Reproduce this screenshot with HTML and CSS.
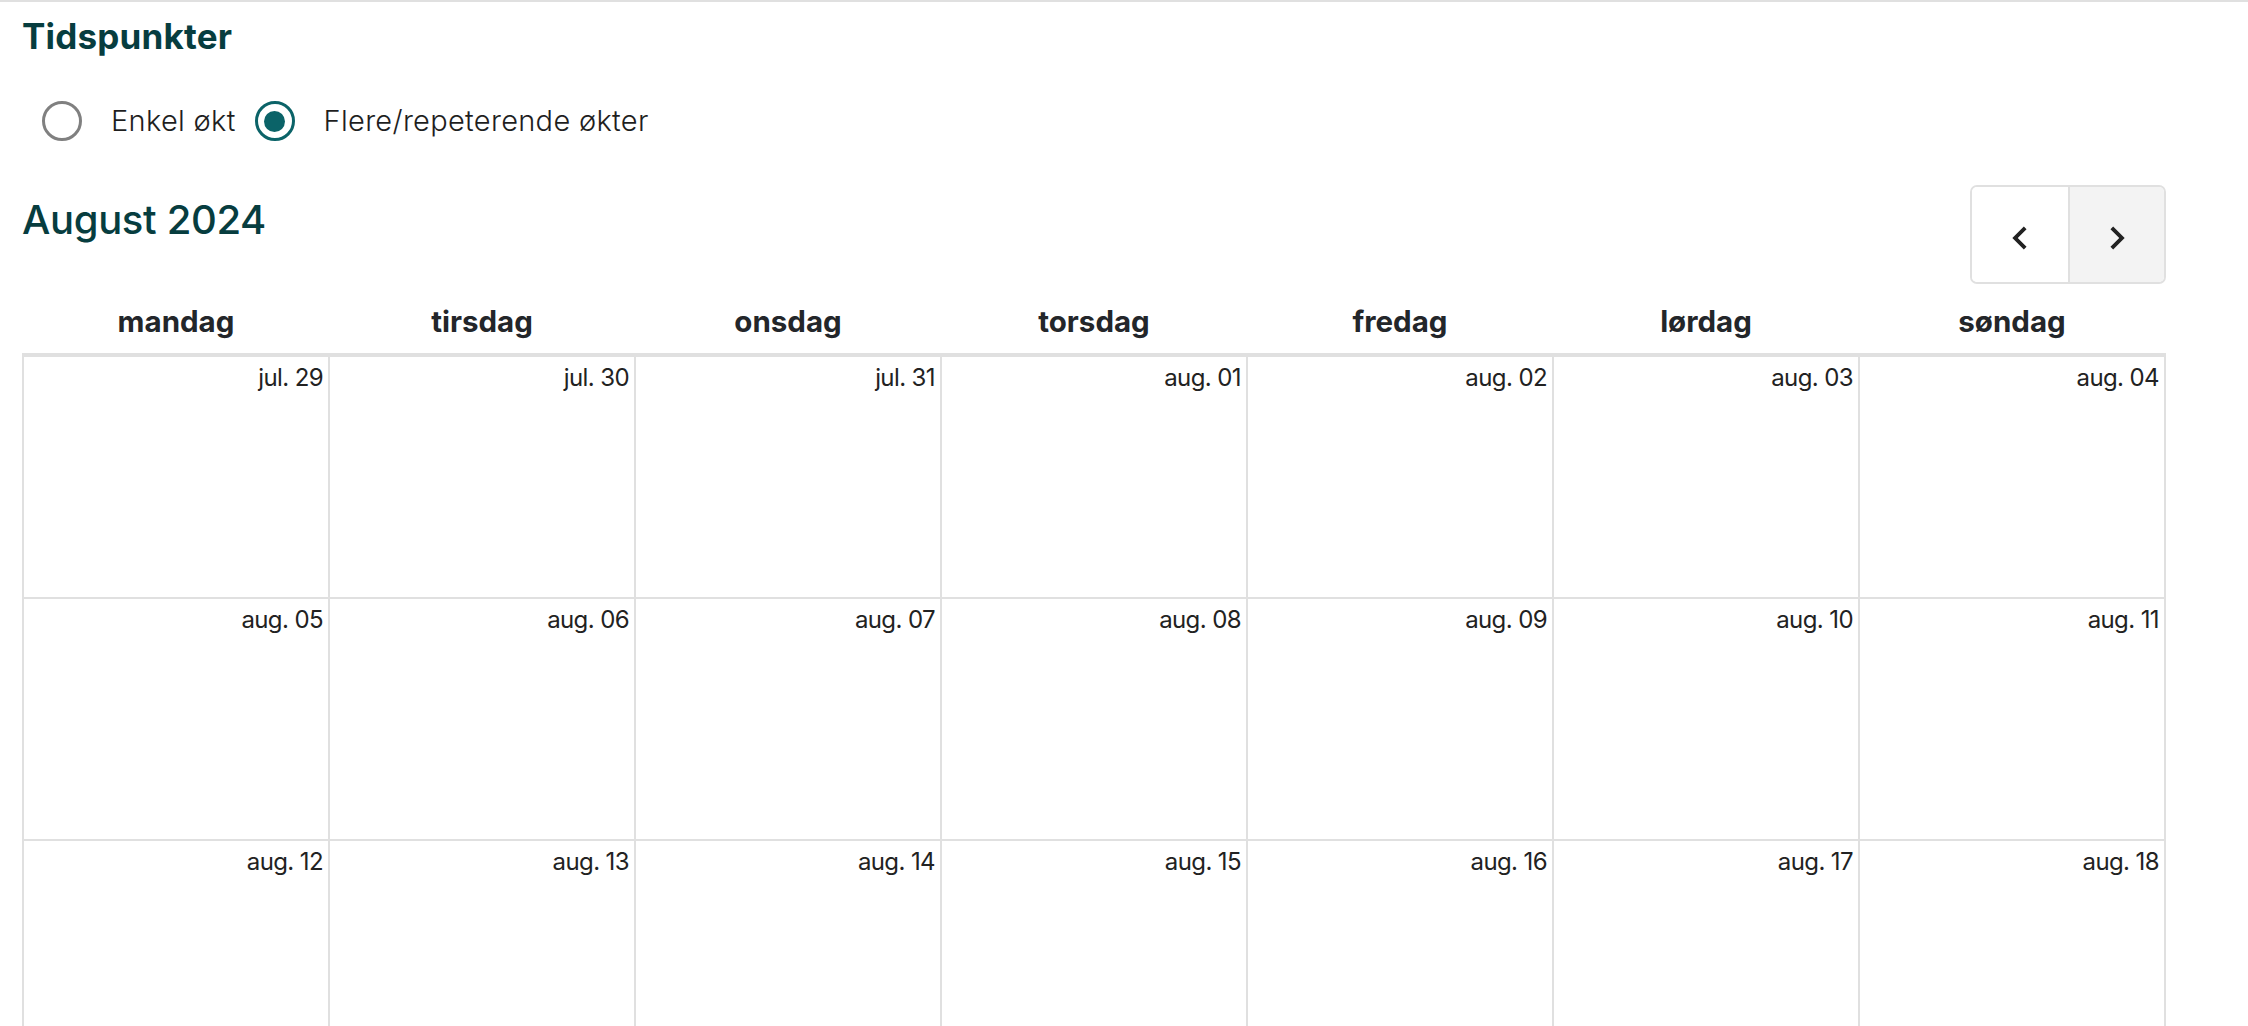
FILE: index.html
```html
<!DOCTYPE html>
<html lang="no">
<head>
<meta charset="utf-8">
<title>Tidspunkter</title>
<link rel="stylesheet" href="styles.css">
</head>
<body>
<div class="page">
  <h2 class="section-title">Tidspunkter</h2>

  <div class="radio-group">
    <label class="radio">
      <span class="radio-circle"></span>
      <span class="radio-text">Enkel økt</span>
    </label>
    <label class="radio">
      <span class="radio-circle checked"><span class="radio-dot"></span></span>
      <span class="radio-text">Flere/repeterende økter</span>
    </label>
  </div>

  <div class="cal-toolbar">
    <h3 class="cal-title">August 2024</h3>
    <div class="cal-nav">
      <button class="nav-btn" type="button" aria-label="Forrige">
        <svg width="46" height="46" viewBox="0 0 24 24"><path d="M15.41 7.41L14 6l-6 6 6 6 1.41-1.41L10.83 12z" fill="#222"/></svg>
      </button>
      <button class="nav-btn hover" type="button" aria-label="Neste">
        <svg width="46" height="46" viewBox="0 0 24 24"><path d="M10 6L8.59 7.41 13.17 12l-4.58 4.59L10 18l6-6z" fill="#222"/></svg>
      </button>
    </div>
  </div>

  <div class="cal-head">
    <div class="dow">mandag</div>
    <div class="dow">tirsdag</div>
    <div class="dow">onsdag</div>
    <div class="dow">torsdag</div>
    <div class="dow">fredag</div>
    <div class="dow">lørdag</div>
    <div class="dow">søndag</div>
  </div>

  <div class="cal-grid">
    <div class="day"><span class="date">jul. 29</span></div>
    <div class="day"><span class="date">jul. 30</span></div>
    <div class="day"><span class="date">jul. 31</span></div>
    <div class="day"><span class="date">aug. 01</span></div>
    <div class="day"><span class="date">aug. 02</span></div>
    <div class="day"><span class="date">aug. 03</span></div>
    <div class="day"><span class="date">aug. 04</span></div>
    <div class="day"><span class="date">aug. 05</span></div>
    <div class="day"><span class="date">aug. 06</span></div>
    <div class="day"><span class="date">aug. 07</span></div>
    <div class="day"><span class="date">aug. 08</span></div>
    <div class="day"><span class="date">aug. 09</span></div>
    <div class="day"><span class="date">aug. 10</span></div>
    <div class="day"><span class="date">aug. 11</span></div>
    <div class="day"><span class="date">aug. 12</span></div>
    <div class="day"><span class="date">aug. 13</span></div>
    <div class="day"><span class="date">aug. 14</span></div>
    <div class="day"><span class="date">aug. 15</span></div>
    <div class="day"><span class="date">aug. 16</span></div>
    <div class="day"><span class="date">aug. 17</span></div>
    <div class="day"><span class="date">aug. 18</span></div>
  </div>
</div>
</body>
</html>
```

FILE: styles.css
```css
html, body {
  margin: 0;
  padding: 0;
  background: #ffffff;
}

body {
  font-family: Inter, "Noto Sans", "Liberation Sans", sans-serif;
  color: #222222;
}

.page {
  border-top: 2px solid #e0e0e0;
  padding: 0 82px 0 22px;
}

.section-title {
  margin: 17px 0 0 0;
  font-size: 35px;
  line-height: 35px;
  font-weight: 700;
  color: #073d3f;
  letter-spacing: 0.2px;
}

.radio-group {
  display: flex;
  align-items: center;
  gap: 19px;
  margin-top: 47px;
  padding-left: 20px;
  height: 40px;
}

.radio {
  display: flex;
  align-items: center;
  gap: 29px;
}

.radio-circle {
  box-sizing: border-box;
  width: 40px;
  height: 40px;
  border-radius: 50%;
  border: 3.5px solid #808080;
  display: flex;
  align-items: center;
  justify-content: center;
}

.radio-circle.checked {
  border-color: #0b6368;
}

.radio-dot {
  width: 21px;
  height: 21px;
  border-radius: 50%;
  background: #0b6368;
}

.radio-text {
  font-size: 29px;
  line-height: 40px;
  font-weight: 300;
  color: #1e1e1e;
  letter-spacing: 0.3px;
}

.cal-toolbar {
  display: flex;
  justify-content: space-between;
  align-items: flex-start;
  margin-top: 44px;
}

.cal-title {
  margin: 0;
  padding-top: 15px;
  font-size: 40px;
  line-height: 40px;
  font-weight: 500;
  color: #073d3f;
  letter-spacing: -0.35px;
}

.cal-nav {
  display: flex;
  border: 2px solid #e0e0e0;
  border-radius: 7px;
  overflow: hidden;
}

.nav-btn {
  width: 96px;
  height: 95px;
  margin: 0;
  padding: 6px 0 0 0;
  border: 0;
  background: #ffffff;
  display: flex;
  align-items: center;
  justify-content: center;
  cursor: pointer;
}

.nav-btn + .nav-btn {
  border-left: 2px solid #e0e0e0;
}

.nav-btn.hover {
  background: #f3f3f3;
}

.cal-head {
  display: grid;
  grid-template-columns: repeat(7, 304px);
  column-gap: 2px;
  padding: 0 2px;
}

.dow {
  text-align: center;
  font-size: 29.5px;
  line-height: 28px;
  font-weight: 700;
  color: #23262a;
  padding: 22.5px 0 18.5px 0;
}

.cal-grid {
  display: grid;
  grid-template-columns: repeat(7, 304px);
  grid-auto-rows: 240px;
  gap: 2px;
  background: #e0e0e0;
  border-top: 4px solid #e0e0e0;
  padding: 0 2px 2px 2px;
}

.day {
  background: #ffffff;
  display: flex;
  justify-content: flex-end;
  align-items: flex-start;
  padding: 9px 5px 0 0;
}

.date {
  font-size: 24px;
  line-height: 24px;
  font-weight: 400;
  color: #222222;
  letter-spacing: -0.6px;
}
```
